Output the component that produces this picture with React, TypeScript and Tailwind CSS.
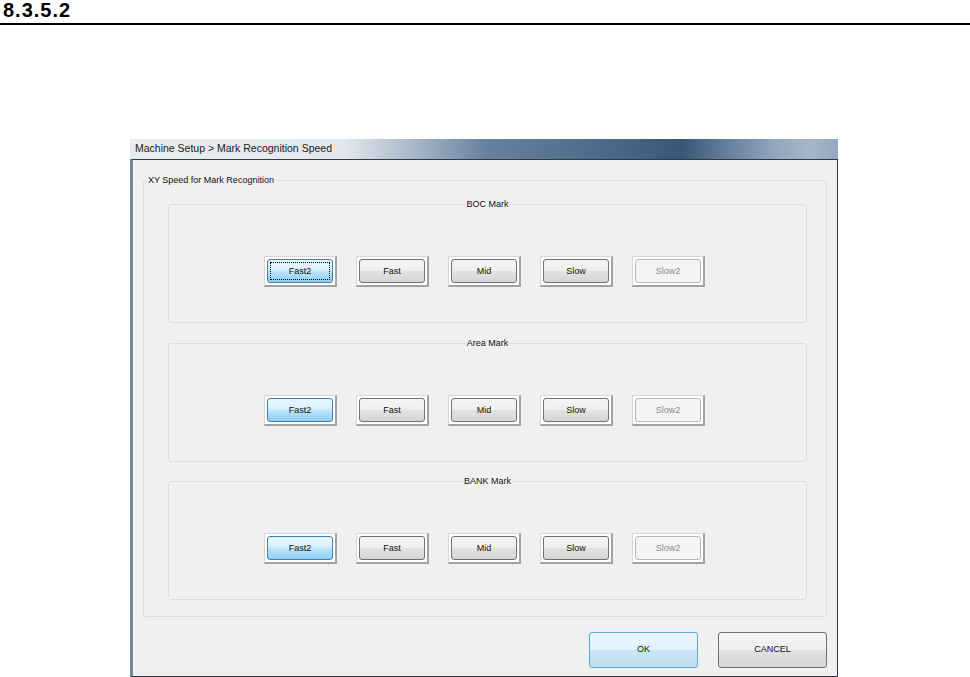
import clsx from "clsx";

const speeds = ["Fast2", "Fast", "Mid", "Slow", "Slow2"];

function SpeedButton({ label, focused }: { label: string; focused: boolean }) {
  const active = label === "Fast2";
  const disabled = label === "Slow2";
  return (
    <div className="border border-[#d6d6d6] border-r-2 border-b-2 border-r-[#a3a3a3] border-b-[#a3a3a3] bg-white p-[2px]">
      <div
        className={clsx(
          "relative flex h-[24px] w-[66px] items-center justify-center rounded-[3px] border text-[9px] leading-none",
          active &&
            "border-[#3c7fb1] bg-[linear-gradient(#eaf6fd_0%,#d9f0fc_45%,#bee6fd_50%,#8fcdf0_100%)] text-[#111]",
          disabled && "border-[#b5b9bc] bg-[#f4f4f4] text-[#8a8a8a]",
          !active &&
            !disabled &&
            "border-[#707070] bg-[linear-gradient(#f4f4f4_0%,#eeeeee_50%,#e2e2e2_50%,#d6d6d6_100%)] text-[#111]"
        )}
      >
        {active && focused && (
          <span className="absolute inset-[2px] border border-dotted border-black" />
        )}
        {label}
      </div>
    </div>
  );
}

function MarkGroup({ title, focused, className }: { title: string; focused?: boolean; className?: string }) {
  return (
    <fieldset className={clsx("rounded-[3px] border border-[#d5dfe5]", className)}>
      <legend className="mx-auto px-[1px] text-[9px] leading-[11px] text-[#111]">{title}</legend>
      <div className="flex gap-[19px] pl-[95px] pt-[46px] pb-[35px]">
        {speeds.map((s) => (
          <SpeedButton key={s} label={s} focused={!!focused} />
        ))}
      </div>
    </fieldset>
  );
}

export default function App() {
  return (
    <div className="h-[677px] w-[970px] overflow-hidden bg-white font-['Liberation_Sans',Arial,sans-serif]">
      {/* section heading */}
      <div className="h-[25px] border-b-2 border-black px-[3px]">
        <span className="text-[20px] font-bold leading-[20px] tracking-[1px] text-black">8.3.5.2</span>
      </div>

      {/* dialog window */}
      <div className="ml-[130px] mt-[114px] w-[708px]">
        <div className="flex h-[20px] items-center bg-[linear-gradient(to_right,#e9ecef_0%,#e3e8ed_30%,#a9b8ca_40%,#6a82a1_50%,#4f6a8c_66%,#3c5678_78%,#6a83a2_85%,#92a5bd_91%,#a6b6ca_96%,#95a8bf_100%)] pl-[5px]">
          <span className="text-[10.5px] text-[#1b1b1b]">Machine Setup &gt; Mark Recognition Speed</span>
        </div>

        <div className="border border-[#2e3a4a] border-l-[3px] border-l-[#7688a0] bg-[#f0f0f0] px-[10px] pt-[15px] pb-[8px]">
          <fieldset className="rounded-[3px] border border-[#d5dfe5]">
            <legend className="ml-[3px] px-[1px] text-[9px] leading-[11px] text-[#111]">
              XY Speed for Mark Recognition
            </legend>
            <div className="pl-[24px] pr-[19px] pt-[13px] pb-[16px]">
              <MarkGroup title="BOC Mark" focused />
              <MarkGroup title="Area Mark" className="mt-[15px]" />
              <MarkGroup title="BANK Mark" className="mt-[14px]" />
            </div>
          </fieldset>

          <div className="mt-[15px] flex justify-end gap-[20px]">
            <button className="flex h-[36px] w-[109px] items-center justify-center rounded-[3px] border border-[#5ca7d9] bg-[linear-gradient(#eaf6fd_0%,#dff1fb_50%,#c9e6f6_50%,#bfe0f2_100%)] text-[9px] text-[#111]">
              OK
            </button>
            <button className="flex h-[36px] w-[109px] items-center justify-center rounded-[3px] border border-[#707070] bg-[linear-gradient(#f4f4f4_0%,#eeeeee_50%,#e2e2e2_50%,#d6d6d6_100%)] text-[9px] text-[#111]">
              CANCEL
            </button>
          </div>
        </div>
      </div>
    </div>
  );
}
